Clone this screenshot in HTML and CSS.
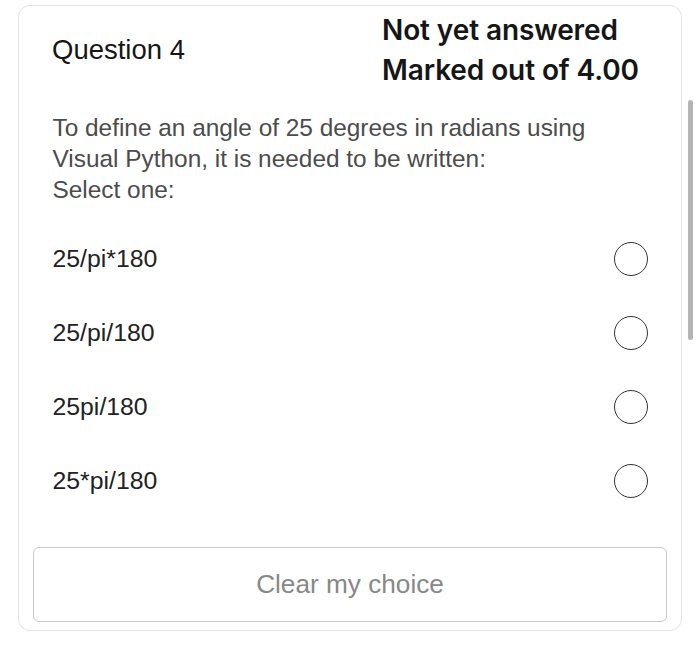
FILE: index.html
```html
<!DOCTYPE html>
<html lang="en">
<head>
<meta charset="utf-8">
<title>Question 4</title>
<link rel="stylesheet" href="styles.css">
</head>
<body>
<div class="card">
  <div class="header">
    <div class="qno">Question 4</div>
    <div class="status">
      <div>Not yet answered</div>
      <div>Marked out of 4.00</div>
    </div>
  </div>
  <div class="qtext">
    <div>To define an angle of 25 degrees in radians using Visual Python, it is needed to be written:</div>
    <div>Select one:</div>
  </div>
  <div class="options">
    <label class="option"><span class="label">25/pi*180</span><span class="radio"></span></label>
    <label class="option"><span class="label">25/pi/180</span><span class="radio"></span></label>
    <label class="option"><span class="label">25pi/180</span><span class="radio"></span></label>
    <label class="option"><span class="label">25*pi/180</span><span class="radio"></span></label>
  </div>
  <div class="clear">Clear my choice</div>
</div>
<div class="scrollbar"></div>
</body>
</html>
```
FILE: styles.css
```css
html, body {
  margin: 0;
  padding: 0;
  background: #ffffff;
}
body {
  font-family: "Liberation Sans", Arial, sans-serif;
  width: 700px;
  height: 649px;
  overflow: hidden;
  position: relative;
}
.card {
  box-sizing: border-box;
  margin: 5px 0 0 18px;
  width: 664px;
  height: 626px;
  border: 1.5px solid #e3e3e3;
  border-radius: 12px;
  padding: 3.5px 14px 0 14px;
}
.header {
  display: flex;
  align-items: center;
  padding-left: 19px;
  color: #161616;
}
.qno {
  width: 330px;
  font-size: 27.5px;
  line-height: 40px;
}
.status {
  font-family: Inter, "Liberation Sans", sans-serif;
  font-size: 28px;
  font-weight: 600;
  line-height: 40px;
  letter-spacing: -0.1px;
}
.qtext {
  margin-top: 22px;
  padding: 0 19px 0 19.5px;
  font-size: 24.4px;
  line-height: 31px;
  color: #4c4c4c;
}
.options {
  margin-top: 17px;
  padding: 0 19.5px 0 19.5px;
  display: flex;
  flex-direction: column;
}
.option {
  height: 74px;
  display: flex;
  align-items: center;
  justify-content: space-between;
  font-size: 24.8px;
  color: #222222;
}
.radio {
  box-sizing: border-box;
  width: 34px;
  height: 34px;
  border: 1.8px solid #333333;
  border-radius: 50%;
}
.clear {
  box-sizing: border-box;
  margin-top: 29px;
  height: 75px;
  border: 1.5px solid #cacaca;
  border-radius: 6px;
  display: flex;
  align-items: center;
  justify-content: center;
  font-size: 26.2px;
  color: #888888;
}
.scrollbar {
  position: absolute;
  left: 688px;
  top: 100px;
  width: 5px;
  height: 240px;
  border-radius: 3px;
  background: #b4b4b4;
}
```
